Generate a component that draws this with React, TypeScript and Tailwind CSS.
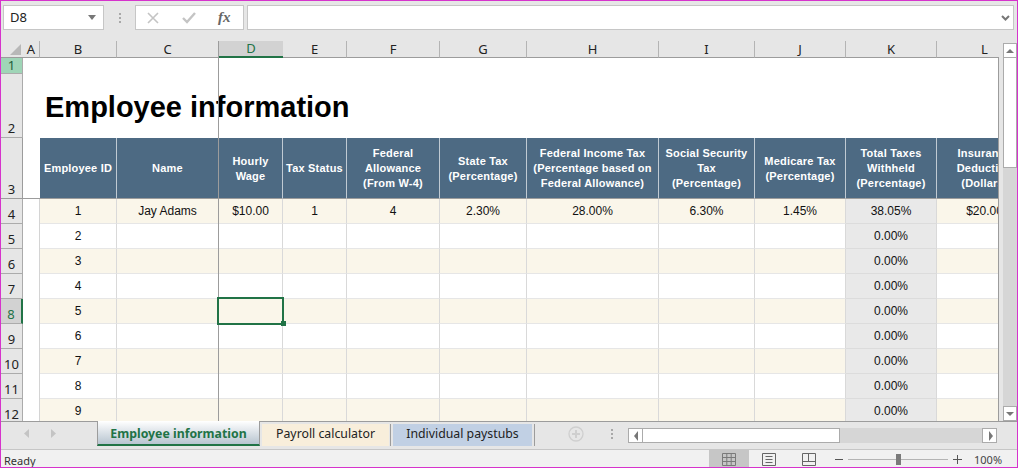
const arial = "font-['Liberation_Sans',Arial,sans-serif]";
const ui = "font-['Noto_Sans',sans-serif]";

const columns = ['A', 'B', 'C', 'D', 'E', 'F', 'G', 'H', 'I', 'J', 'K', 'L'];

const headers: string[][] = [
  ['Employee ID'],
  ['Name'],
  ['Hourly', 'Wage'],
  ['Tax Status'],
  ['Federal', 'Allowance', '(From W-4)'],
  ['State Tax', '(Percentage)'],
  ['Federal Income Tax', '(Percentage based on', 'Federal Allowance)'],
  ['Social Security', 'Tax', '(Percentage)'],
  ['Medicare Tax', '(Percentage)'],
  ['Total Taxes', 'Withheld', '(Percentage)'],
  ['Insurance', 'Deduction', '(Dollars)'],
];

const firstRow = ['1', 'Jay Adams', '$10.00', '1', '4', '2.30%', '28.00%', '6.30%', '1.45%', '38.05%', '$20.00'];
const ids = ['2', '3', '4', '5', '6', '7', '8', '9'];

function ScrollButton({ dir }: { dir: 'up' | 'down' | 'left' | 'right' }) {
  const points = {
    up: '1,6 9,6 5,2',
    down: '1,2 9,2 5,6',
    left: '6,0 6,10 2,5',
    right: '3,0 3,10 7,5',
  }[dir];
  const vertical = dir === 'up' || dir === 'down';
  return (
    <div className={`flex items-center justify-center bg-white border border-[#ababab] shrink-0 ${vertical ? 'w-[14px] h-[15px]' : 'w-[15px] h-[15px]'}`}>
      <svg width={vertical ? 10 : 8} height={vertical ? 8 : 10} viewBox={vertical ? '0 0 10 8' : '0 0 8 10'}>
        <polygon points={points} fill="#777777" />
      </svg>
    </div>
  );
}

function Row({ cells, n }: { cells: string[]; n: number }) {
  const selected = n === 8;
  const banded = n % 2 === 0;
  return (
    <>
      <div className={`flex items-end justify-center border-b border-r text-[13px] leading-[17px] ${ui} ${selected ? 'bg-[#d2d2d2] text-[#217346] border-b-[#ababab] border-r-2 border-r-[#217346]' : 'bg-[#e6e6e6] text-[#222222] border-b-[#ababab] border-r-[#ababab]'}`}>
        {n}
      </div>
      <div className="bg-white border-r border-[#d4d4d4]" />
      {cells.map((text, i) => (
        <div
          key={i}
          className={`relative flex items-center justify-center whitespace-nowrap text-[12px] text-[#111111] border-b border-r border-r-[#d9d9d9] ${arial} ${
            i === 9 ? 'bg-[#e9e9e9] border-b-[#dcdcdc]' : banded ? 'bg-[#faf6ea] border-b-[#e6e6e6]' : 'bg-white border-b-[#e6e6e6]'
          }`}
        >
          {text}
          {selected && i === 2 && (
            <div className="absolute z-10 -left-[2px] -top-[2px] w-[67px] h-[28px] border-2 border-[#217346]">
              <div className="absolute -right-[4px] -bottom-[3px] w-[5px] h-[5px] bg-[#217346]" />
            </div>
          )}
        </div>
      ))}
    </>
  );
}

export default function App() {
  return (
    <div className={`w-[1018px] h-[468px] flex flex-col overflow-hidden bg-[#e6e6e6] border border-[#d633cc] ${ui}`}>
      {/* formula bar */}
      <div className="flex h-[25px] mt-[4px] mb-[11px] pl-[2px] pr-[3px] shrink-0">
        <div className="w-[101px] flex items-center justify-between pl-[6px] pr-[7px] bg-white border border-[#c6c6c6] text-[13px] text-[#222222]">
          D8
          <svg width="8" height="5" viewBox="0 0 8 5"><polygon points="0,0 8,0 4,5" fill="#777777" /></svg>
        </div>
        <div className="w-[31px] flex flex-col items-center justify-center gap-[2px]">
          <span className="w-[2px] h-[2px] bg-[#a8a8a8]" />
          <span className="w-[2px] h-[2px] bg-[#a8a8a8]" />
          <span className="w-[2px] h-[2px] bg-[#a8a8a8]" />
        </div>
        <div className="w-[109px] flex items-center bg-white border border-[#c6c6c6] pl-[11px]">
          <svg width="12" height="12" viewBox="0 0 12 12">
            <path d="M1 1L11 11M11 1L1 11" stroke="#c4c4c4" strokeWidth="1.6" fill="none" />
          </svg>
          <svg width="14" height="12" viewBox="0 0 14 12" className="ml-[23px]">
            <path d="M1 6L5 10L13 1" stroke="#c4c4c4" strokeWidth="2.4" fill="none" />
          </svg>
          <span className="ml-[22px] font-['Liberation_Serif',serif] italic font-bold text-[15px] leading-none text-[#666666]">fx</span>
        </div>
        <div className="flex-1 ml-[3px] flex items-center justify-end pr-[3px] bg-white border border-[#c6c6c6]">
          <svg width="9" height="6" viewBox="0 0 9 6"><path d="M1 1L4.500 4.500L8 1" stroke="#777777" strokeWidth="2" fill="none" /></svg>
        </div>
      </div>

      {/* sheet */}
      <div className="flex h-[380px] shrink-0">
        <div className="relative w-[998px] overflow-hidden">
          <div className="grid grid-cols-[22px_17px_77px_102px_64px_64px_93px_87px_132px_96px_91px_91px_96px] grid-rows-[17px_16px_64px_61px_repeat(9,25px)] w-[1031px]">
            {/* column letters */}
            <div className="flex items-end justify-end pr-[2px] pb-[2px] border-b border-[#9c9c9c]">
              <svg width="11" height="11" viewBox="0 0 11 11"><polygon points="11,0 11,11 0,11" fill="#b8b8b8" /></svg>
            </div>
            {columns.map((c) => (
              <div
                key={c}
                className={`flex items-center justify-center text-[13px] leading-[15px] ${
                  c === 'D'
                    ? 'bg-[#d2d2d2] text-[#217346] border-b-2 border-b-[#217346]'
                    : 'text-[#222222] border-b border-b-[#9c9c9c] border-r border-r-[#b4b4b4]'
                }`}
              >
                {c}
              </div>
            ))}

            {/* row 1 */}
            <div className="flex items-end justify-center bg-[#9fd5b7] border-b border-r border-[#ababab] text-[13px] leading-[16px] text-[#1d5e3a]">1</div>
            <div className="col-span-12 bg-white" />

            {/* row 2 */}
            <div className="flex items-end justify-center bg-[#e6e6e6] border-b border-r border-[#ababab] text-[13px] leading-[17px] text-[#222222]">2</div>
            <div className="col-span-12 bg-white flex items-start pl-[22px] pt-[17px]">
              <h1 className={`text-[29px] leading-[33px] font-bold text-black whitespace-nowrap ${arial}`}>Employee information</h1>
            </div>

            {/* table header */}
            <div className="flex items-end justify-center bg-[#e6e6e6] border-b border-r border-[#9c9c9c] text-[13px] leading-[17px] text-[#222222]">3</div>
            <div className="bg-white border-b border-[#9c9c9c]" />
            {headers.map((lines, i) => (
              <div
                key={i}
                className={`flex flex-col items-center justify-center bg-[#4d6a83] border-r border-b border-r-[#c0cad3] border-b-[#9c9c9c] text-white font-bold text-[11px] leading-[15px] tracking-[0.2px] whitespace-nowrap ${arial} ${lines.length === 2 ? 'pt-[2px]' : ''}`}
              >
                {lines.map((line) => (
                  <span key={line}>{line}</span>
                ))}
              </div>
            ))}

            {/* data rows */}
            <Row n={4} cells={firstRow} />
            {ids.map((id, i) => {
              const cells = Array(11).fill('');
              cells[0] = id;
              cells[9] = '0.00%';
              return <Row key={id} n={i + 5} cells={cells} />;
            })}
          </div>

          {/* frozen pane line and sheet edge */}
          <div className="absolute left-[217px] top-0 bottom-0 w-px bg-[#9c9c9c]" />
          <div className="absolute right-0 top-[17px] bottom-0 w-px bg-[#9c9c9c]" />
        </div>

        {/* vertical scrollbar */}
        <div className="ml-[4px] mt-[2px] w-[14px] flex flex-col">
          <ScrollButton dir="up" />
          <div className="h-[111px] bg-white border border-[#ababab] -mt-px" />
          <div className="flex-1 bg-[#d6d6d6]" />
          <ScrollButton dir="down" />
        </div>
      </div>

      {/* tabs */}
      <div className="flex h-[28px] shrink-0 border-t border-[#9c9c9c]">
        <div className="w-[96px] flex items-center pl-[23px] gap-[22px] pb-[4px]">
          <svg width="5" height="9" viewBox="0 0 5 9"><polygon points="5,0 5,9 0,4.500" fill="#c4c4c4" /></svg>
          <svg width="5" height="9" viewBox="0 0 5 9"><polygon points="0,0 0,9 5,4.500" fill="#c4c4c4" /></svg>
        </div>
        <div className="w-[163px] h-[25px] -mt-px pt-[3px] flex items-center justify-center bg-gradient-to-b from-white to-[#b8c5d0] border-b-2 border-l border-r border-b-[#217346] border-l-[#9c9c9c] border-r-[#9c9c9c] text-[12.300px] font-bold text-[#217346]">
          Employee information
        </div>
        <div className="w-[127px] h-[22px] mt-[2px] ml-[2px] pb-[2px] flex items-center justify-center bg-[#f8eedb] text-[12.300px] text-[#222222]">
          Payroll calculator
        </div>
        <div className="w-px h-[22px] mt-[2px] ml-[1px] bg-[#9c9c9c]" />
        <div className="w-[139px] h-[22px] mt-[2px] ml-[2px] pb-[2px] flex items-center justify-center bg-[#c1d0e4] text-[12.300px] text-[#222222]">
          Individual paystubs
        </div>
        <div className="w-px h-[22px] mt-[2px] ml-[2px] bg-[#9c9c9c]" />
        <div className="w-[93px] flex items-center pb-[4px] pl-[33px] gap-[27px]">
          <svg width="16" height="16" viewBox="0 0 16 16">
            <circle cx="8" cy="8" r="7" stroke="#cfcfcf" strokeWidth="1.300" fill="none" />
            <path d="M8 4V12M4 8H12" stroke="#cfcfcf" strokeWidth="2" />
          </svg>
          <div className="flex flex-col gap-[2px]">
            <span className="w-[2px] h-[2px] bg-[#a8a8a8]" />
            <span className="w-[2px] h-[2px] bg-[#a8a8a8]" />
            <span className="w-[2px] h-[2px] bg-[#a8a8a8]" />
          </div>
        </div>
        <div className="w-[369px] h-[15px] mt-[6px] flex">
          <ScrollButton dir="left" />
          <div className="w-[198px] bg-white border border-[#ababab] -ml-px" />
          <div className="flex-1 bg-[#d6d6d6]" />
          <ScrollButton dir="right" />
        </div>
      </div>

      {/* status bar */}
      <div className="flex flex-1 items-stretch bg-[#f1f1f1] border-t border-[#c6c6c6] text-[11px] text-[#333333]">
        <div className="w-[708px] flex items-center pl-[3px] pt-[3px]">Ready</div>
        <div className="w-[40px] flex items-center justify-center bg-[#c6c6c6]">
          <svg width="14" height="13" viewBox="0 0 14 13">
            <path d="M.5.500H13.500V12.500H.5ZM.5 4.500H13.500M.5 8.500H13.500M4.800.500V12.500M9.200.500V12.500" stroke="#7a7a7a" fill="none" />
          </svg>
        </div>
        <div className="w-[40px] flex items-center justify-center">
          <svg width="14" height="13" viewBox="0 0 14 13">
            <path d="M.5.500H13.500V12.500H.5ZM3.500 3.500H10.500M3.500 6.500H10.500M3.500 9.500H10.500" stroke="#666666" fill="none" />
          </svg>
        </div>
        <div className="w-[40px] flex items-center justify-center">
          <svg width="14" height="13" viewBox="0 0 14 13">
            <path d="M.5.500H13.500V12.500H.5ZM.5 8.500H13.500M6.500.500V8.500" stroke="#666666" fill="none" />
          </svg>
        </div>
        <div className="flex items-center ml-[6px]">
          <span className="w-[8px] h-px bg-[#555555]" />
          <div className="relative w-[100px] h-px bg-[#b4b4b4] ml-[5px]">
            <span className="absolute left-[48px] -top-[5px] w-[5px] h-[11px] bg-[#7a7a7a]" />
          </div>
          <svg width="9" height="9" viewBox="0 0 9 9" className="ml-[5px]">
            <path d="M4.500 0V9M0 4.500H9" stroke="#555555" />
          </svg>
          <span className="ml-[12px] pt-px text-[#444444]">100%</span>
        </div>
      </div>
    </div>
  );
}
